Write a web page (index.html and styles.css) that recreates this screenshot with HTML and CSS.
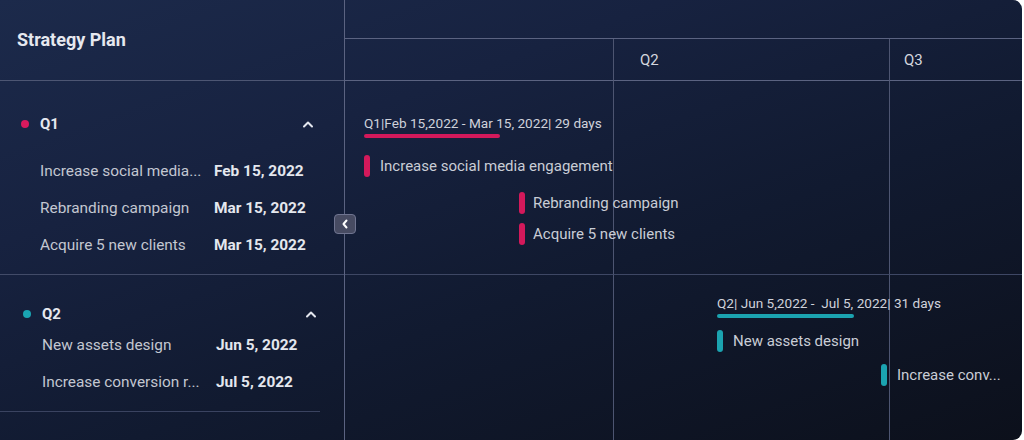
FILE: index.html
```html
<!DOCTYPE html>
<html>
<head>
<meta charset="utf-8">
<link rel="stylesheet" href="styles.css">
</head>
<body>
<div class="board">
  <aside class="sidebar">
    <div class="side-head">Strategy Plan</div>
    <section class="group group-q1">
      <div class="group-head">
        <span class="dot dot-pink"></span>
        <span class="group-title">Q1</span>
        <svg class="chev" width="12" height="8" viewBox="0 0 12 8"><path d="M2 6.5 L6 2.5 L10 6.5" fill="none" stroke="#e3e6ee" stroke-width="2" stroke-linecap="round" stroke-linejoin="round"/></svg>
      </div>
      <div class="row"><span class="name" title="Increase social media engagement">Increase social media...</span><span class="date">Feb 15, 2022</span></div>
      <div class="row"><span class="name">Rebranding campaign</span><span class="date">Mar 15, 2022</span></div>
      <div class="row"><span class="name">Acquire 5 new clients</span><span class="date">Mar 15, 2022</span></div>
    </section>
    <section class="group group-q2">
      <div class="group-head">
        <span class="dot dot-teal"></span>
        <span class="group-title">Q2</span>
        <svg class="chev" width="12" height="8" viewBox="0 0 12 8"><path d="M2 6.5 L6 2.5 L10 6.5" fill="none" stroke="#e3e6ee" stroke-width="2" stroke-linecap="round" stroke-linejoin="round"/></svg>
      </div>
      <div class="row"><span class="name">New assets design</span><span class="date">Jun 5, 2022</span></div>
      <div class="row"><span class="name" title="Increase conversion rate">Increase conversion r...</span><span class="date">Jul 5, 2022</span></div>
    </section>
    <button class="collapse"><svg width="8" height="10" viewBox="0 0 8 10"><path d="M5.5 1.5 L2.5 5 L5.5 8.5" fill="none" stroke="#ffffff" stroke-width="2" stroke-linecap="round" stroke-linejoin="round"/></svg></button>
  </aside>
  <main class="timeline">
    <div class="tl-top"></div>
    <div class="tl-grid">
      <div class="cell c1 r1"></div>
      <div class="cell c2 r1 qlabel">Q2</div>
      <div class="cell c3 r1 qlabel">Q3</div>
      <div class="cell c1 r2"></div>
      <div class="cell c2 r2"></div>
      <div class="cell c3 r2"></div>
      <div class="cell c1 r3"></div>
      <div class="cell c2 r3"></div>
      <div class="cell c3 r3"></div>
    </div>

    <div class="span-label span-q1">Q1|Feb 15,2022 - Mar 15, 2022| 29 days<span class="span-bar pink"></span></div>
    <div class="task t1"><span class="tick pink"></span>Increase social media engagement</div>
    <div class="task t2"><span class="tick pink"></span>Rebranding campaign</div>
    <div class="task t3"><span class="tick pink"></span>Acquire 5 new clients</div>

    <div class="span-label span-q2">Q2| Jun 5,2022 -&nbsp; Jul 5, 2022| 31 days<span class="span-bar teal"></span></div>
    <div class="task t4"><span class="tick teal"></span>New assets design</div>
    <div class="task t5"><span class="tick teal"></span>Increase conv...</div>
  </main>
</div>
</body>
</html>
```
FILE: styles.css
```css
* { box-sizing: border-box; }
html, body { margin: 0; padding: 0; background: #ffffff; }
body { font-family: Roboto, "Liberation Sans", sans-serif; }

.board {
  display: flex;
  width: 1022px;
  height: 440px;
  border-radius: 0 9px 9px 0;
  overflow: hidden;
  background: linear-gradient(160deg, #1c2a4b 0%, #172240 30%, #111a30 60%, #0c101b 100%);
  color: #c8ccd6;
}

.sidebar {
  position: relative;
  width: 345px;
  flex: none;
  border-right: 1px solid #5b6381;
}

.side-head {
  height: 81px;
  display: flex;
  align-items: center;
  padding-left: 17px;
  padding-bottom: 2px;
  font-size: 18px;
  font-weight: 700;
  color: #e6e8ef;
  border-bottom: 1px solid #4d5673;
}

.group { display: flex; flex-direction: column; }
.group-q1 { padding: 31px 0 10px 0; height: 194px; border-bottom: 1px solid #424b68; }
.group-q2 { padding: 27px 0 11px 2px; margin-right: 24px; border-bottom: 1px solid #3a4360; }

.group-head {
  display: flex;
  align-items: center;
  height: 24px;
}
.group-q1 .group-head { margin-bottom: 16px; }

.dot { width: 8px; height: 8px; border-radius: 50%; margin-left: 21px; margin-right: 11px; }
.dot-pink { background: #d91a5e; }
.dot-teal { background: #1aa5b3; }
.group-title { font-size: 15px; font-weight: 700; color: #e6e8ef; flex: 1; }
.chev { margin-right: 30px; }
.group-q2 .chev { margin-right: 3px; }

.row {
  display: flex;
  align-items: center;
  height: 37px;
  padding-left: 40px;
  font-size: 15.4px;
}
.name {
  width: 162px;
  margin-right: 12px;
  white-space: nowrap;
  overflow: hidden;
  color: #c3c7d1;
}
.date { font-weight: 700; color: #e4e7ee; }

.collapse {
  position: absolute;
  right: -12px;
  top: 214px;
  width: 22px;
  height: 20px;
  padding: 0;
  border: 1px solid #6f7490;
  border-radius: 4px;
  background: #474b62;
  display: flex;
  align-items: center;
  justify-content: center;
}

.timeline {
  position: relative;
  flex: 1;
  display: flex;
  flex-direction: column;
}
.tl-top { height: 39px; border-bottom: 1px solid #5b6381; flex: none; }
.tl-grid {
  flex: 1;
  display: grid;
  grid-template-columns: 269px 276px 1fr;
  grid-template-rows: 42px 194px 1fr;
}
.cell { border-right: 1px solid #4d5571; }
.c3 { border-right: none; }
.r1 { border-bottom: 1px solid #5b6381; }
.r2 { border-bottom: 1px solid #3e4764; }
.qlabel {
  display: flex;
  align-items: center;
  padding-left: 26px;
  font-size: 15px;
  color: #d4d7df;
}
.c3.qlabel { padding-left: 14px; }

.span-label {
  position: absolute;
  font-size: 13.6px;
  color: #cfd2db;
  white-space: nowrap;
}
.span-bar {
  position: absolute;
  left: 0;
  top: 19px;
  height: 4px;
  border-radius: 2px;
}
.span-q1 { left: 19px; top: 115px; }
.span-q1 .span-bar { width: 136px; }
.span-q2 { left: 372px; top: 295px; }
.span-q2 .span-bar { width: 137px; }

.pink { background: #d3195b; }
.teal { background: #1ba3b0; }

.task {
  position: absolute;
  display: flex;
  align-items: center;
  font-size: 15px;
  color: #c9cdd6;
  white-space: nowrap;
  height: 22px;
}
.tick { width: 6px; height: 22px; border-radius: 3px; margin-right: 10px; }
.t1 { left: 19px; top: 155px; }
.t2 { left: 174px; top: 192px; }
.t2 .tick, .t3 .tick { margin-right: 8px; }
.t3 { left: 174px; top: 223px; }
.t4 { left: 372px; top: 330px; }
.t5 { left: 536px; top: 364px; }
```
